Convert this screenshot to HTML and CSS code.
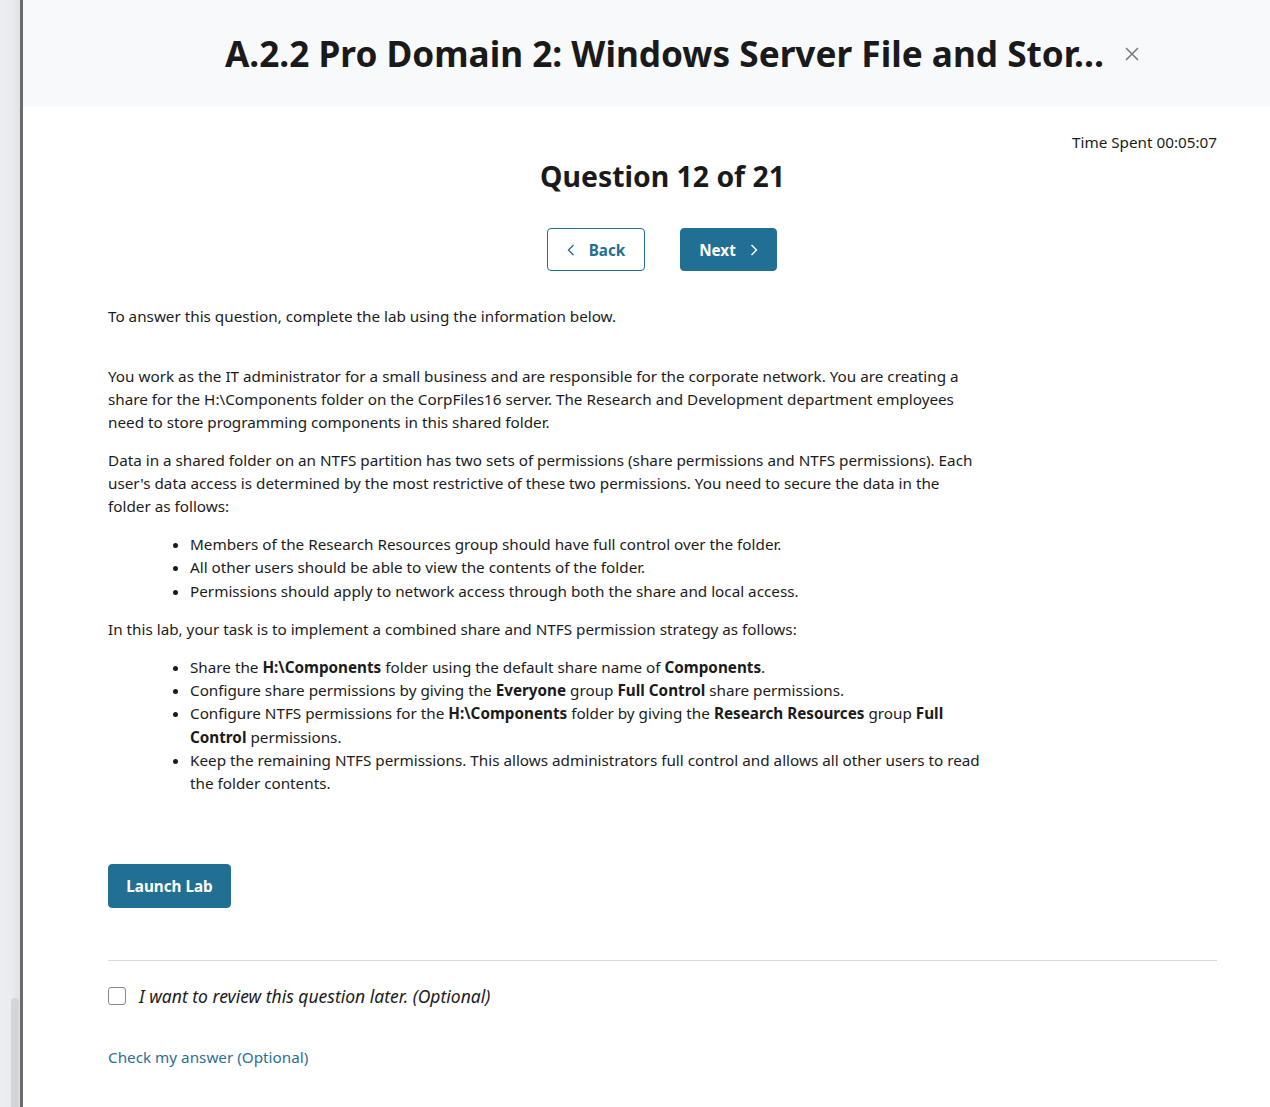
FILE: index.html
```html
<!DOCTYPE html>
<html lang="en">
<head>
<meta charset="utf-8">
<title>Question 12 of 21</title>
<link rel="stylesheet" href="styles.css">
</head>
<body>
<div class="page">
  <div class="backdrop">
    <div class="scroll-thumb"></div>
  </div>
  <div class="edge"></div>
  <div class="modal">
    <header class="modal-header">
      <h1 class="modal-title">A.2.2 Pro Domain 2: Windows Server File and Stor…</h1>
      <button class="close" aria-label="Close">
        <svg width="16" height="16" viewBox="0 0 16 16"><path d="M2 2 L14 14 M14 2 L2 14" stroke="#7a7a7a" stroke-width="1.6" fill="none"/></svg>
      </button>
    </header>
    <main class="content">
      <div class="time-row">Time Spent 00:05:07</div>
      <h2 class="q-title">Question 12 of 21</h2>
      <div class="nav">
        <button class="btn btn-outline">
          <svg width="8" height="12" viewBox="0 0 8 12"><path d="M6.5 1 L1.5 6 L6.5 11" stroke="#226f94" stroke-width="1.4" fill="none"/></svg>
          <span>Back</span>
        </button>
        <button class="btn btn-solid">
          <span>Next</span>
          <svg width="8" height="12" viewBox="0 0 8 12"><path d="M1.5 1 L6.5 6 L1.5 11" stroke="#ffffff" stroke-width="1.4" fill="none"/></svg>
        </button>
      </div>
      <div class="text">
        <p class="intro">To answer this question, complete the lab using the information below.</p>
        <p>You work as the IT administrator for a small business and are responsible for the corporate network. You are creating a share for the H:\Components folder on the CorpFiles16 server. The Research and Development department employees need to store programming components in this shared folder.</p>
        <p>Data in a shared folder on an NTFS partition has two sets of permissions (share permissions and NTFS permissions). Each user's data access is determined by the most restrictive of these two permissions. You need to secure the data in the folder as follows:</p>
        <ul>
          <li>Members of the Research Resources group should have full control over the folder.</li>
          <li>All other users should be able to view the contents of the folder.</li>
          <li>Permissions should apply to network access through both the share and local access.</li>
        </ul>
        <p>In this lab, your task is to implement a combined share and NTFS permission strategy as follows:</p>
        <ul>
          <li>Share the <b>H:\Components</b> folder using the default share name of <b>Components</b>.</li>
          <li>Configure share permissions by giving the <b>Everyone</b> group <b>Full Control</b> share permissions.</li>
          <li>Configure NTFS permissions for the <b>H:\Components</b> folder by giving the <b>Research Resources</b> group <b>Full Control</b> permissions.</li>
          <li>Keep the remaining NTFS permissions. This allows administrators full control and allows all other users to read the folder contents.</li>
        </ul>
      </div>
      <div class="launch-row">
        <button class="btn btn-solid launch">Launch Lab</button>
      </div>
      <hr class="divider">
      <label class="review">
        <span class="checkbox"></span>
        <span class="review-text">I want to review this question later. (Optional)</span>
      </label>
      <a class="check-link" href="#">Check my answer (Optional)</a>
    </main>
  </div>
</div>
</body>
</html>
```

FILE: styles.css
```css
* { box-sizing: border-box; }
html, body { margin: 0; padding: 0; }
body {
  font-family: "Noto Sans", "Open Sans", sans-serif;
  color: #1b1b1b;
  background: #ebedf0;
  height: 1107px;
  overflow: hidden;
}
.page {
  display: flex;
  height: 1107px;
}
.backdrop {
  width: 20px;
  flex: none;
  position: relative;
  background: linear-gradient(to right, #eceef1 0%, #e9ebee 60%, #e0e2e5 100%);
}
.scroll-thumb {
  position: absolute;
  left: 11px;
  top: 998px;
  width: 8px;
  bottom: 0;
  background: #d3d5d9;
  border-radius: 4px 4px 0 0;
}
.edge {
  width: 3px;
  flex: none;
  background: #6b6b6b;
}
.modal {
  flex: 1;
  background: #ffffff;
  display: flex;
  flex-direction: column;
}
.modal-header {
  height: 107px;
  background: #f8f9fb;
  display: flex;
  align-items: center;
  justify-content: center;
  gap: 20px;
  padding-left: 72px;
}
.modal-title {
  margin: 0;
  font-size: 35.2px;
  font-weight: 700;
  color: #1a1a1a;
  letter-spacing: 0;
  padding-bottom: 2px;
}
.close {
  border: 0;
  background: transparent;
  padding: 0;
  width: 16px;
  height: 16px;
  display: flex;
  margin-top: 0;
}
.content {
  padding: 24px 53px 0 85px;
  display: flex;
  flex-direction: column;
}
.time-row {
  text-align: right;
  font-size: 15.25px;
  line-height: 23px;
  color: #1b1b1b;
}
.q-title {
  margin: 2px 0 0;
  text-align: center;
  font-size: 28.4px;
  font-weight: 700;
  line-height: 40px;
  color: #1a1a1a;
}
.nav {
  display: flex;
  justify-content: center;
  gap: 35px;
  margin-top: 32px;
  padding-right: 1px;
}
.btn {
  font-family: inherit;
  font-size: 15.25px;
  font-weight: 700;
  height: 43px;
  border-radius: 4px;
  display: inline-flex;
  align-items: center;
  justify-content: center;
  gap: 14px;
  cursor: pointer;
}
.btn-outline {
  width: 98px;
  background: #ffffff;
  border: 1px solid #226f94;
  color: #226f94;
}
.btn-solid {
  width: 97px;
  background: #226f94;
  border: 1px solid #226f94;
  color: #ffffff;
}
.text {
  max-width: 874px;
  margin-top: 34px;
  font-size: 15.25px;
  line-height: 23px;
}
.text p {
  margin: 0 0 15px;
}
.text p.intro {
  margin-bottom: 37px;
}
.text ul {
  margin: 0 0 15px;
  padding-left: 82px;
}
.text li {
  line-height: 23.3px;
}
.text b { font-weight: 700; }
.launch-row {
  margin-top: 53px;
}
.launch {
  width: 123px;
  height: 44px;
}
.divider {
  border: 0;
  border-top: 1px solid #d9d9d9;
  margin: 52px 0 0;
  height: 0;
}
.review {
  display: flex;
  align-items: center;
  gap: 13px;
  margin-top: 23px;
}
.checkbox {
  width: 18px;
  height: 18px;
  border: 1px solid #8a8a8a;
  border-radius: 3px;
  background: #fff;
  flex: none;
}
.review-text {
  font-style: italic;
  font-size: 17.5px;
  line-height: 24px;
  color: #1b1b1b;
}
.check-link {
  margin-top: 38px;
  font-size: 15.25px;
  line-height: 23px;
  color: #2a6f97;
  text-decoration: none;
  align-self: flex-start;
}
```
